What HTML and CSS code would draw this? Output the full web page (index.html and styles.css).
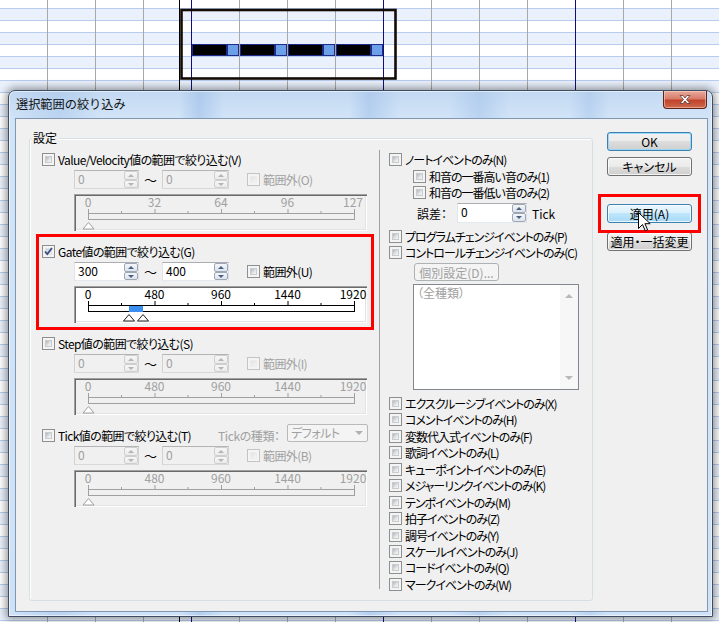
FILE: index.html
```html
<!DOCTYPE html>
<html lang="ja">
<head>
<meta charset="utf-8">
<title>選択範囲の絞り込み</title>
<link rel="stylesheet" href="styles.css">
</head>
<body>
<svg class="canvas" width="719" height="622" viewBox="0 0 719 622">
  <defs>
    <pattern id="rows" x="0" y="8" width="719" height="24" patternUnits="userSpaceOnUse">
      <rect x="0" y="0" width="719" height="24" fill="#ffffff"/>
      <rect x="0" y="0" width="719" height="12" fill="#eaf1fc"/>
      <rect x="0" y="0" width="719" height="1" fill="#b6cdee"/>
      <rect x="0" y="12" width="719" height="1" fill="#b6cdee"/>
    </pattern>
  </defs>
  <rect width="719" height="622" fill="url(#rows)"/>
  <g stroke="#a8a8a8" stroke-width="1">
    <path d="M47.5 0V622M95.5 0V622M143.5 0V622M239.5 0V622M287.5 0V622M335.5 0V622M431.5 0V622M479.5 0V622M527.5 0V622M623.5 0V622M671.5 0V622"/>
  </g>
  <g stroke="#10107a" stroke-width="1">
    <path d="M191.5 0V622M383.5 0V622M575.5 0V622"/>
  </g>
  <path d="M179.5 0V622" stroke="#000" stroke-width="1"/>
  <rect x="181.5" y="10" width="214" height="68.5" fill="none" stroke="#140c04" stroke-width="2.6"/>
  <g stroke="#1c2c8c" stroke-width="1">
    <rect x="192.5" y="44.5" width="34" height="11" fill="#000"/>
    <rect x="227.5" y="44.5" width="11" height="11" fill="#6c9fe8"/>
    <rect x="240.5" y="44.5" width="34" height="11" fill="#000"/>
    <rect x="275.5" y="44.5" width="11" height="11" fill="#6c9fe8"/>
    <rect x="288.5" y="44.5" width="34" height="11" fill="#000"/>
    <rect x="323.5" y="44.5" width="11" height="11" fill="#6c9fe8"/>
    <rect x="336.5" y="44.5" width="34" height="11" fill="#000"/>
    <rect x="371.5" y="44.5" width="11" height="11" fill="#6c9fe8"/>
  </g>
</svg>

<div class="dialog">
  <div class="titlebar"><span class="title">選択範囲の絞り込み</span></div>
  <div class="close">
    <svg width="14" height="11" viewBox="0 0 14 11"><path d="M2 1.5h3l2 2.5 2-2.5h3l-3.5 4 3.5 4h-3l-2-2.5-2 2.5h-3l3.5-4z" fill="#fff" stroke="#5a3a36" stroke-width="0.8"/></svg>
  </div>
  <div class="client">
    <div class="group">
      <span class="legend">設定</span>
      <div class="leftcol">

        <section class="sec">
          <div class="cb"><span class="box"></span><span class="t">Value/Velocity値の範囲で絞り込む(V)</span></div>
          <div class="editrow">
            <div class="edit dis e1"><span class="val">0</span><span class="spin"><i class="up"></i><i class="dn"></i></span></div>
            <span class="tilde">～</span>
            <div class="edit dis e2"><span class="val">0</span><span class="spin"><i class="up"></i><i class="dn"></i></span></div>
            <div class="cb dis out"><span class="box"></span><span class="t">範囲外(O)</span></div>
          </div>
          <div class="slider dis">
            <svg width="293" height="37" viewBox="0 0 293 37">
              <g class="lbl"><text x="14" y="12.5">0</text><text x="80.5" y="12.5">32</text><text x="147" y="12.5">64</text><text x="213.5" y="12.5">96</text><text x="279" y="12.5">127</text></g>
              <path d="M14.5 15v5M81 15v5M147.5 15v5M214 15v5M280.5 15v5M47.5 17v3M114 17v3M180.5 17v3M247 17v3" stroke="#a0a0a0"/>
              <rect x="14.5" y="19.5" width="266" height="6" fill="none" stroke="#a0a0a0"/>
              <path d="M14.5 28.5l5.5 6.5h-11z" fill="#fff" stroke="#a0a0a0"/>
            </svg>
          </div>
        </section>

        <section class="sec gate">
          <div class="cb"><span class="box on"><svg width="9" height="9" viewBox="0 0 9 9"><path d="M1 4.5l2.3 2.6L8 1" fill="none" stroke="#3b4f82" stroke-width="1.8"/></svg></span><span class="t">Gate値の範囲で絞り込む(G)</span></div>
          <div class="editrow">
            <div class="edit e1"><span class="val">300</span><span class="spin"><i class="up"></i><i class="dn"></i></span></div>
            <span class="tilde">～</span>
            <div class="edit e2"><span class="val">400</span><span class="spin"><i class="up"></i><i class="dn"></i></span></div>
            <div class="cb out"><span class="box"></span><span class="t">範囲外(U)</span></div>
          </div>
          <div class="slider">
            <svg width="293" height="37" viewBox="0 0 293 37">
              <g class="lbl on"><text x="14" y="12.5">0</text><text x="80.5" y="12.5">480</text><text x="147" y="12.5">960</text><text x="213.5" y="12.5">1440</text><text x="279" y="12.5">1920</text></g>
              <path d="M14.5 15v5M81 15v5M147.5 15v5M214 15v5M280.5 15v5M47.5 17v3M114 17v3M180.5 17v3M247 17v3" stroke="#000"/>
              <rect x="14.5" y="19.5" width="266" height="6" fill="#fff" stroke="#000"/>
              <rect x="55" y="20" width="14" height="6" fill="#3b8ff0"/>
              <path d="M55 28.5l5.5 6.5h-11z" fill="#fff" stroke="#222"/>
              <path d="M69 28.5l5.5 6.5h-11z" fill="#fff" stroke="#222"/>
            </svg>
          </div>
        </section>

        <section class="sec">
          <div class="cb"><span class="box"></span><span class="t">Step値の範囲で絞り込む(S)</span></div>
          <div class="editrow">
            <div class="edit dis e1"><span class="val">0</span><span class="spin"><i class="up"></i><i class="dn"></i></span></div>
            <span class="tilde">～</span>
            <div class="edit dis e2"><span class="val">0</span><span class="spin"><i class="up"></i><i class="dn"></i></span></div>
            <div class="cb dis out"><span class="box"></span><span class="t">範囲外(I)</span></div>
          </div>
          <div class="slider dis">
            <svg width="293" height="37" viewBox="0 0 293 37">
              <g class="lbl"><text x="14" y="12.5">0</text><text x="80.5" y="12.5">480</text><text x="147" y="12.5">960</text><text x="213.5" y="12.5">1440</text><text x="279" y="12.5">1920</text></g>
              <path d="M14.5 15v5M81 15v5M147.5 15v5M214 15v5M280.5 15v5M47.5 17v3M114 17v3M180.5 17v3M247 17v3" stroke="#a0a0a0"/>
              <rect x="14.5" y="19.5" width="266" height="6" fill="none" stroke="#a0a0a0"/>
              <path d="M14.5 28.5l5.5 6.5h-11z" fill="#fff" stroke="#a0a0a0"/>
            </svg>
          </div>
        </section>

        <section class="sec">
          <div class="cbline">
            <div class="cb tickcb"><span class="box"></span><span class="t">Tick値の範囲で絞り込む(T)</span></div>
            <span class="ticktype">Tickの種類：</span>
            <div class="combo"><span>デフォルト</span><i class="arrow"></i></div>
          </div>
          <div class="editrow">
            <div class="edit dis e1"><span class="val">0</span><span class="spin"><i class="up"></i><i class="dn"></i></span></div>
            <span class="tilde">～</span>
            <div class="edit dis e2"><span class="val">0</span><span class="spin"><i class="up"></i><i class="dn"></i></span></div>
            <div class="cb dis out"><span class="box"></span><span class="t">範囲外(B)</span></div>
          </div>
          <div class="slider dis">
            <svg width="293" height="37" viewBox="0 0 293 37">
              <g class="lbl"><text x="14" y="12.5">0</text><text x="80.5" y="12.5">480</text><text x="147" y="12.5">960</text><text x="213.5" y="12.5">1440</text><text x="279" y="12.5">1920</text></g>
              <path d="M14.5 15v5M81 15v5M147.5 15v5M214 15v5M280.5 15v5M47.5 17v3M114 17v3M180.5 17v3M247 17v3" stroke="#a0a0a0"/>
              <rect x="14.5" y="19.5" width="266" height="6" fill="none" stroke="#a0a0a0"/>
              <path d="M14.5 28.5l5.5 6.5h-11z" fill="#fff" stroke="#a0a0a0"/>
            </svg>
          </div>
        </section>
      </div>

      <div class="sep"></div>

      <div class="rightcol">
        <div class="cb"><span class="box"></span><span class="t">ノートイベントのみ(N)</span></div>
        <div class="cb sub s1"><span class="box"></span><span class="t">和音の一番高い音のみ(1)</span></div>
        <div class="cb sub s2"><span class="box"></span><span class="t">和音の一番低い音のみ(2)</span></div>
        <div class="gosa">
          <span class="glabel">誤差：</span>
          <div class="edit e3"><span class="val">0</span><span class="spin"><i class="up"></i><i class="dn"></i></span></div>
          <span class="tickunit">Tick</span>
        </div>
        <div class="cb prog"><span class="box"></span><span class="t">プログラムチェンジイベントのみ(P)</span></div>
        <div class="cb ctrl"><span class="box"></span><span class="t">コントロールチェンジイベントのみ(C)</span></div>
        <div class="btn small dis">個別設定(D)...</div>
        <div class="listbox">
          <span class="item">（全種類）</span>
          <div class="vscroll"><i class="sup"></i><i class="sdn"></i></div>
        </div>
        <div class="evlist">
          <div class="cb"><span class="box"></span><span class="t">エクスクルーシブイベントのみ(X)</span></div>
          <div class="cb"><span class="box"></span><span class="t">コメントイベントのみ(H)</span></div>
          <div class="cb"><span class="box"></span><span class="t">変数代入式イベントのみ(F)</span></div>
          <div class="cb"><span class="box"></span><span class="t">歌詞イベントのみ(L)</span></div>
          <div class="cb"><span class="box"></span><span class="t">キューポイントイベントのみ(E)</span></div>
          <div class="cb"><span class="box"></span><span class="t">メジャーリンクイベントのみ(K)</span></div>
          <div class="cb"><span class="box"></span><span class="t">テンポイベントのみ(M)</span></div>
          <div class="cb"><span class="box"></span><span class="t">拍子イベントのみ(Z)</span></div>
          <div class="cb"><span class="box"></span><span class="t">調号イベントのみ(Y)</span></div>
          <div class="cb"><span class="box"></span><span class="t">スケールイベントのみ(J)</span></div>
          <div class="cb"><span class="box"></span><span class="t">コードイベントのみ(Q)</span></div>
          <div class="cb"><span class="box"></span><span class="t">マークイベントのみ(W)</span></div>
        </div>
      </div>
    </div>

    <div class="buttons">
      <div class="btn default">OK</div>
      <div class="btn">キャンセル</div>
      <div class="btn hover apply">適用(A)</div>
      <div class="btn">適用・一括変更</div>
    </div>
  </div>
</div>

<div class="mark mark-gate"></div>
<div class="mark mark-btn"></div>
<svg class="cursor" width="13" height="20" viewBox="0 0 13 20">
  <path d="M0.5 0.5V16.5L4.5 12.5L7.3 18.8L9.6 17.8L6.9 11.7H12.2Z" fill="#fff" stroke="#000" stroke-width="1"/>
</svg>
</body>
</html>
```

FILE: styles.css
```css
* { box-sizing: border-box; }
html, body { margin: 0; padding: 0; }
body {
  width: 719px;
  height: 622px;
  overflow: hidden;
  position: relative;
  font-family: "Noto Sans CJK JP", "Noto Sans", sans-serif;
  font-size: 12px;
  font-feature-settings: "palt";
  color: #000;
  background: #fff;
}
.canvas { display: block; }

/* window */
.dialog {
  position: absolute;
  left: 8px;
  top: 90px;
  width: 705px;
  height: 527px;
  border: 1px solid #3e4d62;
  border-radius: 7px 7px 0 0;
  padding: 0 4px 4px 6px;
  display: flex;
  flex-direction: column;
  background:
    linear-gradient(90deg, rgba(255,255,255,0) 0, rgba(160,192,232,.45) 50px, rgba(255,255,255,0) 90px, rgba(255,255,255,0) 170px, rgba(150,185,230,.5) 190px, rgba(255,255,255,0) 215px, rgba(255,255,255,0) 340px, rgba(150,185,230,.45) 360px, rgba(255,255,255,0) 390px, rgba(255,255,255,0) 440px, rgba(150,185,230,.4) 470px, rgba(255,255,255,0) 500px, rgba(255,255,255,0) 560px, rgba(150,185,230,.35) 580px, rgba(255,255,255,0) 600px),
    linear-gradient(#c3d9f2, #d3e5f8 30px, #cfe2f7);
  box-shadow: 0 0 9px 2px rgba(0,0,0,.42), inset 0 0 0 1px rgba(255,255,255,.55);
}
.titlebar {
  height: 27px;
  flex: none;
  display: flex;
  align-items: center;
}
.title {
  margin-left: 1px;
  margin-top: -1px;
  font-size: 12.2px;
  color: #111;
  font-feature-settings: normal;
}
.close {
  position: absolute;
  left: 654px;
  top: 0px;
  width: 44px;
  height: 18px;
  border: 1px solid #5c2418;
  border-top: none;
  border-radius: 0 0 4px 4px;
  background: linear-gradient(#e9a99b 0%, #d87d6a 45%, #c0432a 55%, #cf6a4c 100%);
  box-shadow: inset 0 0 0 1px rgba(255,220,210,.5);
  display: flex;
  align-items: center;
  justify-content: center;
}
.close svg { display: block; }

.client {
  flex: 1;
  background: #f0f0f0;
  border: 1px solid #8197b1;
  display: flex;
  align-items: flex-start;
  padding: 13px 0 0 13px;
}

/* group box */
.group {
  position: relative;
  margin-top: 6px;
  width: 564px;
  height: 463px;
  border: 1px solid #d5dfe5;
  border-radius: 3px;
  display: flex;
  box-shadow: inset 1px 1px 0 #fff;
}
.legend {
  position: absolute;
  left: 2px;
  top: -8px;
  padding: 0 2px 0 1px;
  background: #f0f0f0;
  line-height: 14px;
}
.leftcol {
  width: 349px;
  flex: none;
  padding: 14px 0 0 12px;
}
.leftcol .cb .t { letter-spacing: -0.6px; }
.sep {
  width: 1px;
  flex: none;
  margin-top: 11px;
  height: 439px;
  background: #a0a0a0;
}
.rightcol {
  flex: 1;
  padding: 14px 0 0 9px;
}
.rightcol .cb .t { letter-spacing: -1px; }

/* checkbox */
.cb {
  display: flex;
  align-items: center;
  height: 13px;
  white-space: nowrap;
}
.cb .t { margin-left: 3px; line-height: 13px; }
.cb.dis .t { color: #a0a0a0; }
.box {
  width: 13px;
  height: 13px;
  flex: none;
  border: 1px solid #8e8f8f;
  background: #f4f4f4;
  position: relative;
  display: flex;
  align-items: center;
  justify-content: center;
}
.box::before {
  content: "";
  position: absolute;
  left: 2px; top: 2px; right: 2px; bottom: 2px;
  background: linear-gradient(135deg, #b0b5bb, #e4e6e8 60%, #f6f6f6);
  border: 1px solid #c9cccf;
}
.box.on::before { background: linear-gradient(135deg, #cfd3d8, #eef0f2); border-color: #dfe2e5; }
.box svg { position: relative; display: block; }
.cb.dis .box { border-color: #c4c4c4; }
.cb.dis .box::before { background: linear-gradient(135deg, #e2e2e2, #f4f4f4); border-color: #ececec; }

/* sections */
.sec { height: 92px; }
.editrow {
  margin-top: 4px;
  height: 19px;
  display: flex;
  align-items: center;
  padding-left: 32px;
}
.edit {
  height: 19px;
  display: flex;
  align-items: stretch;
  background: #fff;
  border: 1px solid #abadb3;
  border-color: #abadb3 #dbdfe6 #e3e9ef #e2e3ea;
}
.edit .val { flex: 1; padding-left: 3px; line-height: 16px; }
.edit.dis { background: #f0f0f0; border-color: #b4b4b4 #d2d2d2 #d8d8d8 #d2d2d2; }
.edit.dis .val { color: #a0a0a0; }
.e1 { width: 65px; }
.e2 { width: 67px; }
.spin {
  width: 14px;
  flex: none;
  display: flex;
  flex-direction: column;
}
.spin i {
  flex: 1;
  border: 1px solid #9ea7b5;
  border-radius: 2px;
  background: linear-gradient(#f4f6f9, #dce3ec);
  position: relative;
}
.spin i::after {
  content: "";
  position: absolute;
  left: 3px;
  top: 2px;
  border-left: 3px solid transparent;
  border-right: 3px solid transparent;
}
.spin i.up::after { border-bottom: 3px solid #4d5f80; }
.spin i.dn::after { border-top: 3px solid #4d5f80; }
.edit.dis .spin i { border-color: #cfcfcf; background: linear-gradient(#f6f6f6, #ebebeb); }
.edit.dis .spin i.up::after { border-bottom-color: #b4b4b4; }
.edit.dis .spin i.dn::after { border-top-color: #b4b4b4; }
.tilde { width: 23px; text-align: center; font-size: 13px; line-height: 19px; }
.cb.out { margin-left: 18px; }

.slider {
  margin-top: 5px;
  margin-left: 32px;
  width: 293px;
  height: 37px;
  background: #fff;
  box-shadow: inset 1px 1px 0 #a0a0a0, inset 2px 2px 0 #696969, inset -1px -1px 0 #fff, inset -2px -2px 0 #e3e3e3;
}
.slider.dis { background: #f0f0f0; }
.slider svg { display: block; }
.lbl text {
  font-family: "Noto Sans CJK JP", "Noto Sans", sans-serif;
  font-size: 12px;
  fill: #a0a0a0;
  text-anchor: middle;
}
.lbl.on text { fill: #000; }

.gate { position: relative; }

/* tick row */
.cbline {
  display: flex;
  align-items: flex-end;
  height: 13px;
}
.cb.tickcb { width: 176px; }
.ticktype { width: 69px; color: #a0a0a0; line-height: 13px; white-space: nowrap; letter-spacing: -0.4px; }
.combo {
  width: 81px;
  height: 18px;
  flex: none;
  border: 1px solid #b9b9b9;
  border-radius: 2px;
  background: #f4f4f4;
  display: flex;
  align-items: center;
  color: #a0a0a0;
  padding-left: 3px;
  position: relative;
}
.combo span { flex: 1; line-height: 16px; letter-spacing: -0.5px; }
.combo .arrow {
  width: 0; height: 0;
  margin-right: 4px;
  border-left: 4px solid transparent;
  border-right: 4px solid transparent;
  border-top: 4px solid #b0b0b0;
}

/* right column */
.cb.sub { padding-left: 24px; }
.cb.s1 { margin-top: 4px; }
.cb.s2 { margin-top: 3px; }
.gosa {
  margin-top: 4px;
  height: 20px;
  display: flex;
  align-items: center;
  padding-left: 28px;
}
.glabel { width: 40px; white-space: nowrap; }
.e3 { width: 70px; height: 20px; }
.tickunit { margin-left: 5px; }
.cb.prog { margin-top: 7px; }
.cb.ctrl { margin-top: 3px; }
.btn.small {
  margin-top: 4px;
  margin-left: 25px;
  width: 85px;
  height: 18px;
}
.listbox {
  margin-top: 3px;
  margin-left: 24px;
  width: 166px;
  height: 106px;
  background: #fff;
  border: 1px solid #828790;
  display: flex;
}
.listbox .item { flex: 1; color: #a0a0a0; padding-left: 3px; line-height: 14px; padding-top: 1px; }
.vscroll {
  width: 18px;
  background: #f7f7f7;
  position: relative;
}
.vscroll i { position: absolute; left: 5px; width: 0; height: 0; border-left: 4px solid transparent; border-right: 4px solid transparent; }
.vscroll .sup { top: 9px; border-bottom: 4px solid #b8b8b8; }
.vscroll .sdn { bottom: 9px; border-top: 4px solid #b8b8b8; }
.evlist {
  margin-top: 7px;
  display: flex;
  flex-direction: column;
  gap: 3.45px;
}

/* buttons */
.buttons {
  margin-left: 14px;
  width: 85px;
  display: flex;
  flex-direction: column;
}
.btn {
  width: 85px;
  height: 19px;
  border: 1px solid #707070;
  border-radius: 3px;
  background: linear-gradient(#f2f2f2 0%, #ebebeb 50%, #dddddd 50%, #cfcfcf 100%);
  box-shadow: inset 0 0 0 1px rgba(255,255,255,.75);
  display: flex;
  align-items: center;
  justify-content: center;
  white-space: nowrap;
  line-height: 15px;
}
.btn.default {
  border-color: #3c7fb1;
  box-shadow: inset 0 0 0 1px #9ad8f7;
}
.buttons .btn:nth-child(2) { margin-top: 6px; }
.btn.apply { margin-top: 28px; }
.buttons .btn:nth-child(4) { margin-top: 9px; }
.btn.hover {
  border-color: #3c7fb1;
  background: linear-gradient(#eaf6fd 0%, #d9f0fc 50%, #bee6fd 50%, #a7d9f5 100%);
}
.btn.dis { color: #a0a0a0; border-color: #adb2b5; background: #f4f4f4; box-shadow: none; }

/* annotations */
.mark {
  position: absolute;
  border: 3px solid #ff0000;
}
.mark-gate { left: 36px; top: 234px; width: 338px; height: 96px; }
.mark-btn { left: 598px; top: 194px; width: 103px; height: 39px; }
.cursor { position: absolute; left: 638px; top: 212px; }
```
